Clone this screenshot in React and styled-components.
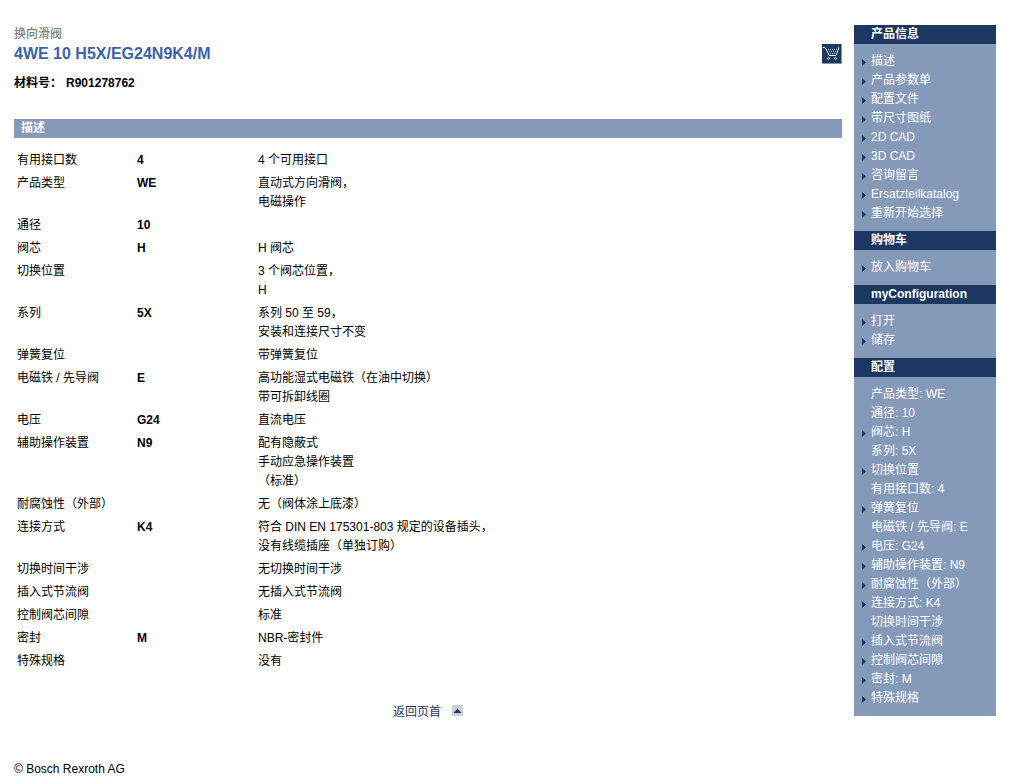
import { Fragment } from 'react'
import { styled, createGlobalStyle } from 'styled-components'

const features = [
  { name: '有用接口数', code: '4', text: ['4 个可用接口'] },
  { name: '产品类型', code: 'WE', text: ['直动式方向滑阀，', '电磁操作'] },
  { name: '通径', code: '10', text: [] },
  { name: '阀芯', code: 'H', text: ['H 阀芯'] },
  { name: '切换位置', code: '', text: ['3 个阀芯位置，', 'H'] },
  { name: '系列', code: '5X', text: ['系列 50 至 59，', '安装和连接尺寸不变'] },
  { name: '弹簧复位', code: '', text: ['带弹簧复位'] },
  { name: '电磁铁 / 先导阀', code: 'E', text: ['高功能湿式电磁铁（在油中切换）', '带可拆卸线圈'] },
  { name: '电压', code: 'G24', text: ['直流电压'] },
  { name: '辅助操作装置', code: 'N9', text: ['配有隐蔽式', '手动应急操作装置', '（标准）'] },
  { name: '耐腐蚀性（外部）', code: '', text: ['无（阀体涂上底漆）'] },
  { name: '连接方式', code: 'K4', text: ['符合 DIN EN 175301-803 规定的设备插头，', '没有线缆插座（单独订购）'] },
  { name: '切换时间干涉', code: '', text: ['无切换时间干涉'] },
  { name: '插入式节流阀', code: '', text: ['无插入式节流阀'] },
  { name: '控制阀芯间隙', code: '', text: ['标准'] },
  { name: '密封', code: 'M', text: ['NBR-密封件'] },
  { name: '特殊规格', code: '', text: ['没有'] },
]

const link = (label) => ({ label, linked: true })
const plain = (label) => ({ label, linked: false })

const menu = [
  {
    title: '产品信息',
    items: [
      link('描述'),
      link('产品参数单'),
      link('配置文件'),
      link('带尺寸图纸'),
      link('2D CAD'),
      link('3D CAD'),
      link('咨询留言'),
      link('Ersatzteilkatalog'),
      link('重新开始选择'),
    ],
  },
  { title: '购物车', items: [link('放入购物车')] },
  { title: 'myConfiguration', items: [link('打开'), link('储存')] },
  {
    title: '配置',
    items: [
      plain('产品类型: WE'),
      plain('通径: 10'),
      link('阀芯: H'),
      plain('系列: 5X'),
      link('切换位置'),
      plain('有用接口数: 4'),
      link('弹簧复位'),
      plain('电磁铁 / 先导阀: E'),
      link('电压: G24'),
      link('辅助操作装置: N9'),
      link('耐腐蚀性（外部）'),
      link('连接方式: K4'),
      plain('切换时间干涉'),
      link('插入式节流阀'),
      link('控制阀芯间隙'),
      link('密封: M'),
      link('特殊规格'),
    ],
  },
]

function CartIcon() {
  return (
    <svg width="20" height="20" viewBox="0 0 20 20" shapeRendering="crispEdges" aria-hidden="true">
      <rect width="20" height="20" fill="#8599b9" />
      <rect width="19" height="19" fill="#1c3760" />
      {/* handle and basket */}
      <path
        fill="#fff"
        d="M1 3h2v1h-2zM3 4h1v1h-1zM4 5h1v2h-1zM5 7h1v2h-1zM6 9h1v2h-1zM7 11h7v1h-7zM14 9h1v2h-1zM15 6h1v3h-1zM16 3h1v3h-1z"
      />
      <path
        fill="#c3cddd"
        d="M6 5h1v1h-1zM8 5h1v1h-1zM10 5h1v1h-1zM12 5h1v1h-1zM14 5h1v1h-1zM7 7h1v1h-1zM9 7h1v1h-1zM11 7h1v1h-1zM13 7h1v1h-1zM8 9h1v1h-1zM10 9h1v1h-1zM12 9h1v1h-1z"
      />
      {/* wheels */}
      <path
        fill="#fff"
        d="M6 13h1v1h-1zM5 14h1v1h-1zM7 14h1v1h-1zM6 15h1v1h-1zM13 13h1v1h-1zM12 14h1v1h-1zM14 14h1v1h-1zM13 15h1v1h-1z"
      />
    </svg>
  )
}

function Marker() {
  return (
    <svg width="4" height="7" viewBox="0 0 4 7" aria-hidden="true">
      <path d="M0 0L4 3.500L0 7z" fill="#1c3760" />
    </svg>
  )
}

function TopIcon() {
  return (
    <svg width="11" height="11" viewBox="0 0 11 11" aria-hidden="true">
      <rect width="11" height="11" fill="#cdd0d4" />
      <path d="M5.500 3.500L9.500 8H1.500z" fill="#1c3760" />
    </svg>
  )
}

function App() {
  return (
    <>
      <GlobalStyle />
      <Page>
        <Columns>
          <Main id="top">
            <Category>换向滑阀</Category>
            <TitleRow>
              <Title>4WE 10 H5X/EG24N9K4/M</Title>
              <CartButton type="button" aria-label="放入购物车">
                <CartIcon />
              </CartButton>
            </TitleRow>
            <Material>
              <span>材料号：</span>
              <span>R901278762</span>
            </Material>
            <SectionBar>描述</SectionBar>
            <FeatureTable>
              <colgroup>
                <Col $width="120px" />
                <Col $width="121px" />
                <col />
              </colgroup>
              <tbody>
                {features.map(({ name, code, text }) => (
                  <tr key={name}>
                    <Name scope="row">{name}</Name>
                    <Code>{code}</Code>
                    <Cell>
                      {text.map((line, i) => (
                        <Fragment key={line}>
                          {i > 0 && <br />}
                          {line}
                        </Fragment>
                      ))}
                    </Cell>
                  </tr>
                ))}
              </tbody>
            </FeatureTable>
            <BackToTop href="#top">
              返回页首
              <TopIcon />
            </BackToTop>
          </Main>
          <Sidebar>
            {menu.map(({ title, items }) => (
              <section key={title}>
                <MenuTitle>{title}</MenuTitle>
                <MenuList>
                  {items.map(({ label, linked }) => (
                    <MenuItem key={label}>
                      <MarkerSlot>{linked && <Marker />}</MarkerSlot>
                      {linked ? <MenuLink href="#">{label}</MenuLink> : label}
                    </MenuItem>
                  ))}
                </MenuList>
              </section>
            ))}
          </Sidebar>
        </Columns>
        <Footer>© Bosch Rexroth AG</Footer>
      </Page>
    </>
  )
}

const GlobalStyle = createGlobalStyle`
  * {
    box-sizing: border-box;
  }
  body {
    margin: 0;
    background: #fff;
    color: #000;
    font-family: "Liberation Sans", "Noto Sans CJK SC", sans-serif;
    font-size: 12px;
    line-height: 19px;
  }
`

const Page = styled.div`
  padding: 25px 21px 0 14px;
`

const Columns = styled.div`
  display: flex;
  align-items: flex-start;
  gap: 12px;
`

const Main = styled.main`
  flex: 1;
  min-width: 0;
  display: flex;
  flex-direction: column;
`

const Category = styled.p`
  margin: 0;
  color: #808080;
  font-weight: 500;
`

const TitleRow = styled.div`
  display: flex;
  align-items: center;
  justify-content: space-between;
  height: 20px;
`

const Title = styled.h1`
  margin: 0;
  color: #3d62a8;
  font-size: 16px;
  line-height: 20px;
`

const CartButton = styled.button`
  display: flex;
  padding: 0;
  border: none;
  background: none;
  cursor: pointer;
`

const Material = styled.p`
  display: flex;
  gap: 4px;
  margin: 10px 0 26px;
  font-weight: bold;
`

const SectionBar = styled.h2`
  margin: 0;
  padding: 0 7px;
  height: 19px;
  background: #8599b9;
  color: #fff;
  font-size: 12px;
  line-height: 18px;
`

const FeatureTable = styled.table`
  width: 100%;
  margin: 11px 0 30px;
  border-collapse: collapse;
  table-layout: fixed;
`

const Col = styled.col`
  width: ${({ $width }) => $width};
`

const Cell = styled.td`
  padding: 2px 3px;
  text-align: left;
  vertical-align: top;
`

const Name = styled(Cell).attrs({ as: 'th' })`
  font-weight: normal;
`

const Code = styled(Cell)`
  font-weight: bold;
`

const BackToTop = styled.a`
  display: flex;
  align-items: center;
  align-self: center;
  gap: 11px;
  color: #1c3760;
  text-decoration: none;
  svg {
    margin-bottom: 4px;
  }
`

const Sidebar = styled.nav`
  flex: 0 0 142px;
  background: #8599b9;
  color: #fff;
`

const MenuTitle = styled.h2`
  margin: 0;
  padding-left: 17px;
  height: 19px;
  background: #1c3760;
  font-size: 12px;
  line-height: 18px;
`

const MenuList = styled.ul`
  margin: 0;
  padding: 8px 0 8px 8px;
  list-style: none;
`

const MenuItem = styled.li`
  display: flex;
  height: 19px;
  white-space: nowrap;
`

const MarkerSlot = styled.span`
  flex: 0 0 9px;
  display: flex;
  align-items: flex-end;
  padding-bottom: 5px;
`

const MenuLink = styled.a`
  color: inherit;
  text-decoration: none;
`

const Footer = styled.footer`
  margin-top: 38px;
`

export default App
